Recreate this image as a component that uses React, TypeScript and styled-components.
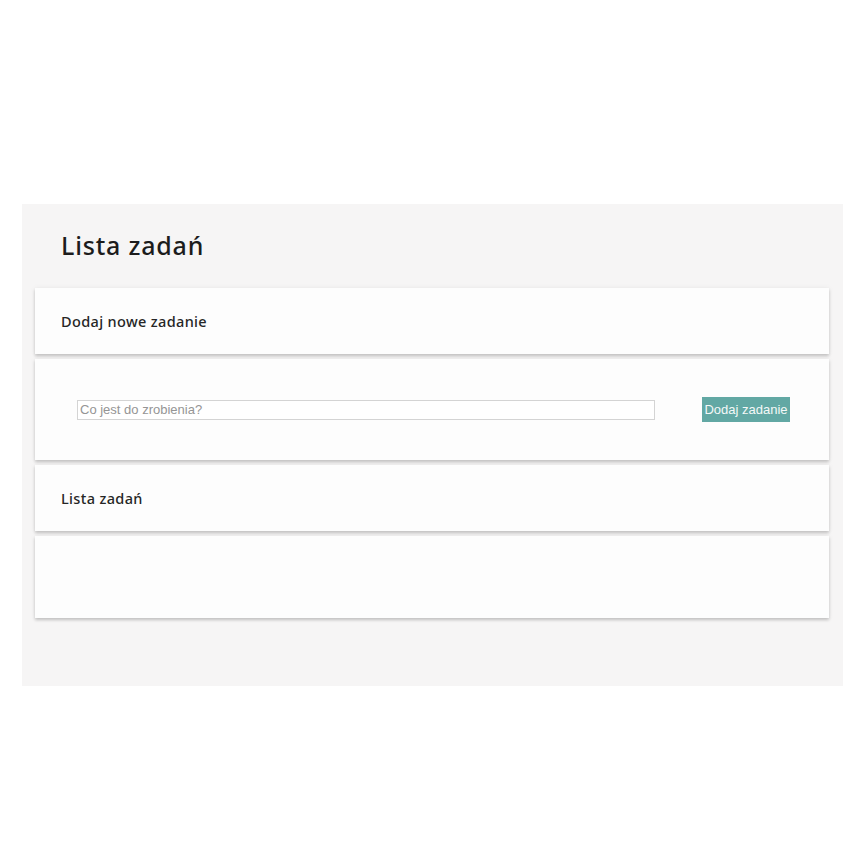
import styled, { createGlobalStyle } from "styled-components";

const GlobalStyle = createGlobalStyle`
  body {
    margin: 0;
    background: #ffffff;
    font-family: "Noto Sans", "Open Sans", sans-serif;
  }
`;

const Strona = styled.div`
  padding: 204px 21px 0 22px;
`;

const Panel = styled.main`
  width: 821px;
  height: 482px;
  box-sizing: border-box;
  background: #f6f5f5;
  padding: 26px 14px 0 13px;
`;

const Tytul = styled.h1`
  margin: 0 0 0 26px;
  height: 58px;
  font-size: 25px;
  line-height: 30px;
  font-weight: 500;
  letter-spacing: 0.8px;
  color: #1c1c1c;
`;

const Karta = styled.section<{ $wysokosc: number }>`
  height: ${(p) => p.$wysokosc}px;
  background: #fdfdfd;
  box-shadow: 0 2px 3px rgba(0, 0, 0, 0.2), 0 0 6px rgba(0, 0, 0, 0.05);
  margin-bottom: 5px;
  box-sizing: border-box;
  display: flex;
  align-items: center;
`;

const Naglowek = styled.h2`
  margin: 0 0 0 26px;
  font-size: 14.5px;
  font-weight: 500;
  letter-spacing: 0.35px;
  color: #262626;
`;

const Formularz = styled.form`
  display: flex;
  align-items: center;
  width: 100%;
  padding: 0 39px 0 42px;
`;

const Pole = styled.input`
  width: 578px;
  height: 20px;
  box-sizing: border-box;
  border: 1px solid #d4d4d4;
  padding: 0 2px;
  font-family: "Liberation Sans", Arial, sans-serif;
  font-size: 13px;
  color: #333;
  outline: none;
  &::placeholder {
    color: #959595;
  }
`;

const Przycisk = styled.button`
  margin-left: auto;
  width: 88px;
  height: 25px;
  border: none;
  background: #62a8a4;
  color: #f4f8f8;
  font-family: "Liberation Sans", Arial, sans-serif;
  font-size: 13px;
  padding: 0;
`;

export default function App() {
  return (
    <Strona>
      <GlobalStyle />
      <Panel>
        <Tytul>Lista zadań</Tytul>
        <Karta $wysokosc={66}>
          <Naglowek>Dodaj nowe zadanie</Naglowek>
        </Karta>
        <Karta $wysokosc={101}>
          <Formularz onSubmit={(e) => e.preventDefault()}>
            <Pole type="text" placeholder="Co jest do zrobienia?" />
            <Przycisk type="submit">Dodaj zadanie</Przycisk>
          </Formularz>
        </Karta>
        <Karta $wysokosc={66}>
          <Naglowek>Lista zadań</Naglowek>
        </Karta>
        <Karta $wysokosc={82} />
      </Panel>
    </Strona>
  );
}
